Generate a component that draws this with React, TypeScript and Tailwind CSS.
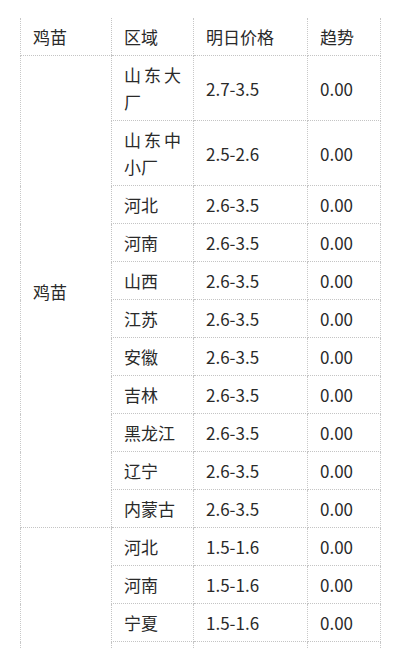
import React from 'react';

interface PriceRow {
  region: string;
  price: string;
  trend: string;
}

interface PriceGroup {
  name: string;
  rows: PriceRow[];
}

const groups: PriceGroup[] = [
  {
    name: '鸡苗',
    rows: [
      { region: '山东大厂', price: '2.7-3.5', trend: '0.00' },
      { region: '山东中小厂', price: '2.5-2.6', trend: '0.00' },
      { region: '河北', price: '2.6-3.5', trend: '0.00' },
      { region: '河南', price: '2.6-3.5', trend: '0.00' },
      { region: '山西', price: '2.6-3.5', trend: '0.00' },
      { region: '江苏', price: '2.6-3.5', trend: '0.00' },
      { region: '安徽', price: '2.6-3.5', trend: '0.00' },
      { region: '吉林', price: '2.6-3.5', trend: '0.00' },
      { region: '黑龙江', price: '2.6-3.5', trend: '0.00' },
      { region: '辽宁', price: '2.6-3.5', trend: '0.00' },
      { region: '内蒙古', price: '2.6-3.5', trend: '0.00' },
    ],
  },
  {
    name: '鸭苗',
    rows: [
      { region: '河北', price: '1.5-1.6', trend: '0.00' },
      { region: '河南', price: '1.5-1.6', trend: '0.00' },
      { region: '宁夏', price: '1.5-1.6', trend: '0.00' },
      { region: '山东', price: '1.5-1.6', trend: '0.00' },
      { region: '山西', price: '1.5-1.6', trend: '0.00' },
      { region: '江苏', price: '1.5-1.6', trend: '0.00' },
      { region: '安徽', price: '1.5-1.6', trend: '0.00' },
      { region: '辽宁', price: '1.5-1.6', trend: '0.00' },
    ],
  },
];

const cell = 'px-3 py-[5px] align-middle font-normal border-b border-dotted border-b-[#c4c4c4]';
const line = 'border-r border-r-[#c8c8c8]';

export default function App() {
  return (
    <div
      lang="zh-CN"
      className="min-h-[648px] bg-white pt-[18px] pl-5 text-[17px] leading-[27px] text-[#2a2a2a]"
      style={{ fontFamily: '"Noto Sans CJK SC", "Noto Sans", sans-serif' }}
    >
      <table className="w-[360px] table-fixed border-collapse">
        <colgroup>
          <col className="w-[91px]" />
          <col className="w-[82px]" />
          <col className="w-[114px]" />
          <col className="w-[73px]" />
        </colgroup>
        <thead>
          <tr>
            <th className={`${cell} text-left py-[3.5px] border-l border-l-[#c8c8c8]`}>鸡苗</th>
            <th className={`${cell} text-left py-[3.5px] border-l border-dotted border-l-[#c4c4c4] ${line}`}>区域</th>
            <th className={`${cell} text-left py-[3.5px] ${line}`}>明日价格</th>
            <th className={`${cell} text-left py-[3.5px] ${line}`}>趋势</th>
          </tr>
        </thead>
        <tbody>
          {groups.map((group) =>
            group.rows.map((row, i) => (
              <tr key={group.name + row.region}>
                {i === 0 && (
                  <td
                    rowSpan={group.rows.length}
                    className={`${cell} border-l border-l-[#c8c8c8]`}
                  >
                    {group.name}
                  </td>
                )}
                <td className={`${cell} text-justify border-l border-dotted border-l-[#c4c4c4] ${line}`}>
                  {row.region}
                </td>
                <td className={`${cell} ${line}`}>{row.price}</td>
                <td className={`${cell} ${line}`}>{row.trend}</td>
              </tr>
            ))
          )}
        </tbody>
      </table>
    </div>
  );
}
